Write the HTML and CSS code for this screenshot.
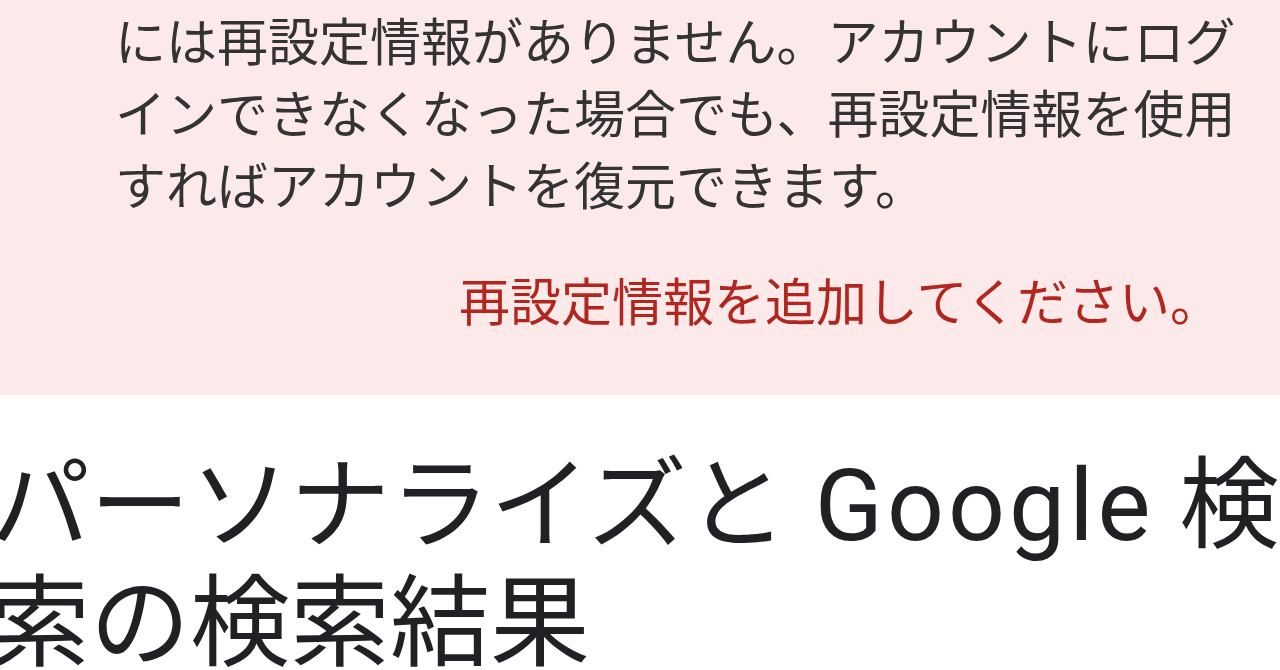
FILE: index.html
```html
<!DOCTYPE html>
<html lang="ja">
<head>
<meta charset="utf-8">
<title>パーソナライズと Google 検索の検索結果</title>
<link rel="stylesheet" href="styles.css">
</head>
<body>
<section class="notice">
  <p class="notice-text">には再設定情報がありません。アカウントにログインできなくなった場合でも、再設定情報を使用すればアカウントを復元できます。</p>
  <p class="notice-action"><a class="notice-link" href="#">再設定情報を追加してください。</a></p>
</section>
<h1 class="title">パーソナライズと <span class="latin">Google</span> 検索の検索結果</h1>
</body>
</html>
```

FILE: styles.css
```css
html, body {
  margin: 0;
  padding: 0;
  background: #ffffff;
}

body {
  font-family: "Noto Sans CJK JP", "Noto Sans", sans-serif;
  overflow: hidden;
}

.notice {
  background: #fceaeb;
  padding: 3px 35px 60px 115px;
}

.notice-text {
  margin: 0;
  font-size: 51px;
  line-height: 72px;
  color: #333333;
}

.notice-action {
  margin: 44px 0 0 0;
  padding-right: 24px;
  text-align: right;
  font-size: 51px;
  line-height: 72px;
}

.notice-link {
  color: #b3261e;
  text-decoration: none;
}

.title {
  margin: 52px 0 0 -10px;
  font-family: "Roboto", "Noto Sans CJK JP", sans-serif;
  font-weight: 400;
  font-size: 100px;
  line-height: 118px;
  color: #202124;
}

.latin {
  padding-left: 3px;
  letter-spacing: 4px;
}
```
